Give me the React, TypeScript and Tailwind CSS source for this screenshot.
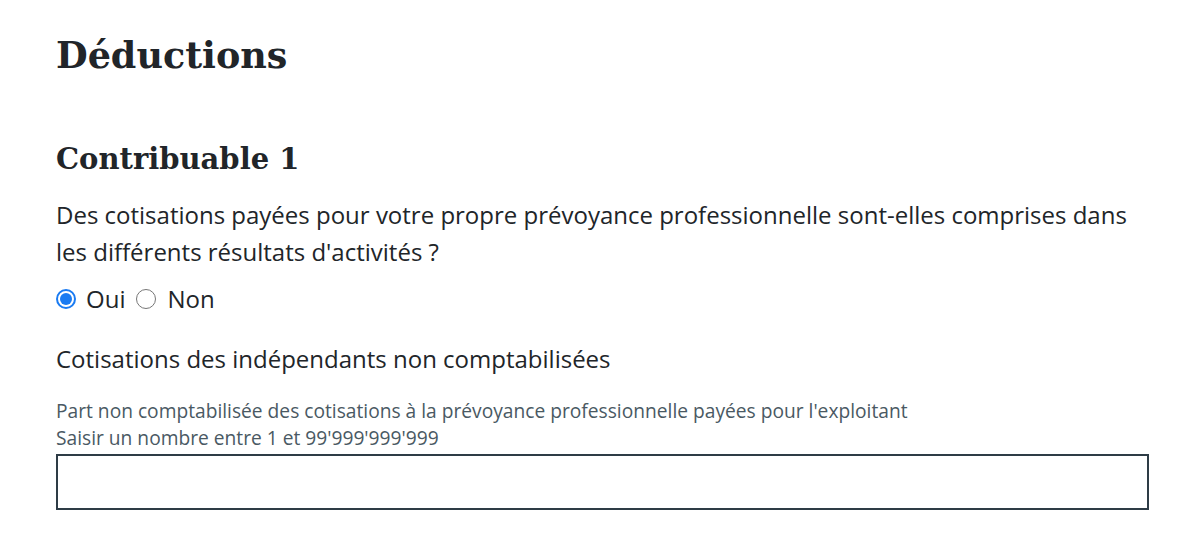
export default function App() {
    return (
        <div className="min-h-[557px] bg-white px-[56px] pt-[34px] text-[#212529]" style={{ fontFamily: '"Open Sans", "Noto Sans", sans-serif' }}>
            <h1 className="text-[36.5px] font-bold leading-[44px] mb-[64px]" style={{ fontFamily: '"DejaVu Serif", serif' }}>
                Déductions
            </h1>

            <h2 className="text-[29px] font-bold leading-[35px] mb-[19px]" style={{ fontFamily: '"DejaVu Serif", serif' }}>
                Contribuable 1
            </h2>

            <p className="text-[24px] leading-[37px] max-w-[1092px]">
                Des cotisations payées pour votre propre prévoyance professionnelle sont-elles comprises dans les différents résultats d'activités ?
            </p>

            <div className="flex items-center mt-[14px] text-[24px] leading-[30px]">
                <label className="flex items-center gap-[10px] mr-[11px]">
                    <span className="w-[20px] h-[20px] rounded-full border-[2px] border-[#1a7bf2] bg-white p-[2px] flex">
                        <span className="flex-1 rounded-full bg-[#1a7bf2]" />
                    </span>
                    Oui
                </label>
                <label className="flex items-center gap-[11px]">
                    <span className="w-[20px] h-[20px] rounded-full border border-[#767676] bg-white" />
                    Non
                </label>
            </div>

            <div className="mt-[29px] text-[24px] leading-[32px]">Cotisations des indépendants non comptabilisées</div>

            <div className="mt-[22px] text-[19.2px] leading-[27px] text-[#4a5963]">
                <div>Part non comptabilisée des cotisations à la prévoyance professionnelle payées pour l'exploitant</div>
                <div>Saisir un nombre entre 1 et 99'999'999'999</div>
            </div>

            <input
                type="text"
                className="block w-[1093px] h-[56px] border-2 border-[#2e3c46] mt-[3px] outline-none"
            />
        </div>
    );
}
